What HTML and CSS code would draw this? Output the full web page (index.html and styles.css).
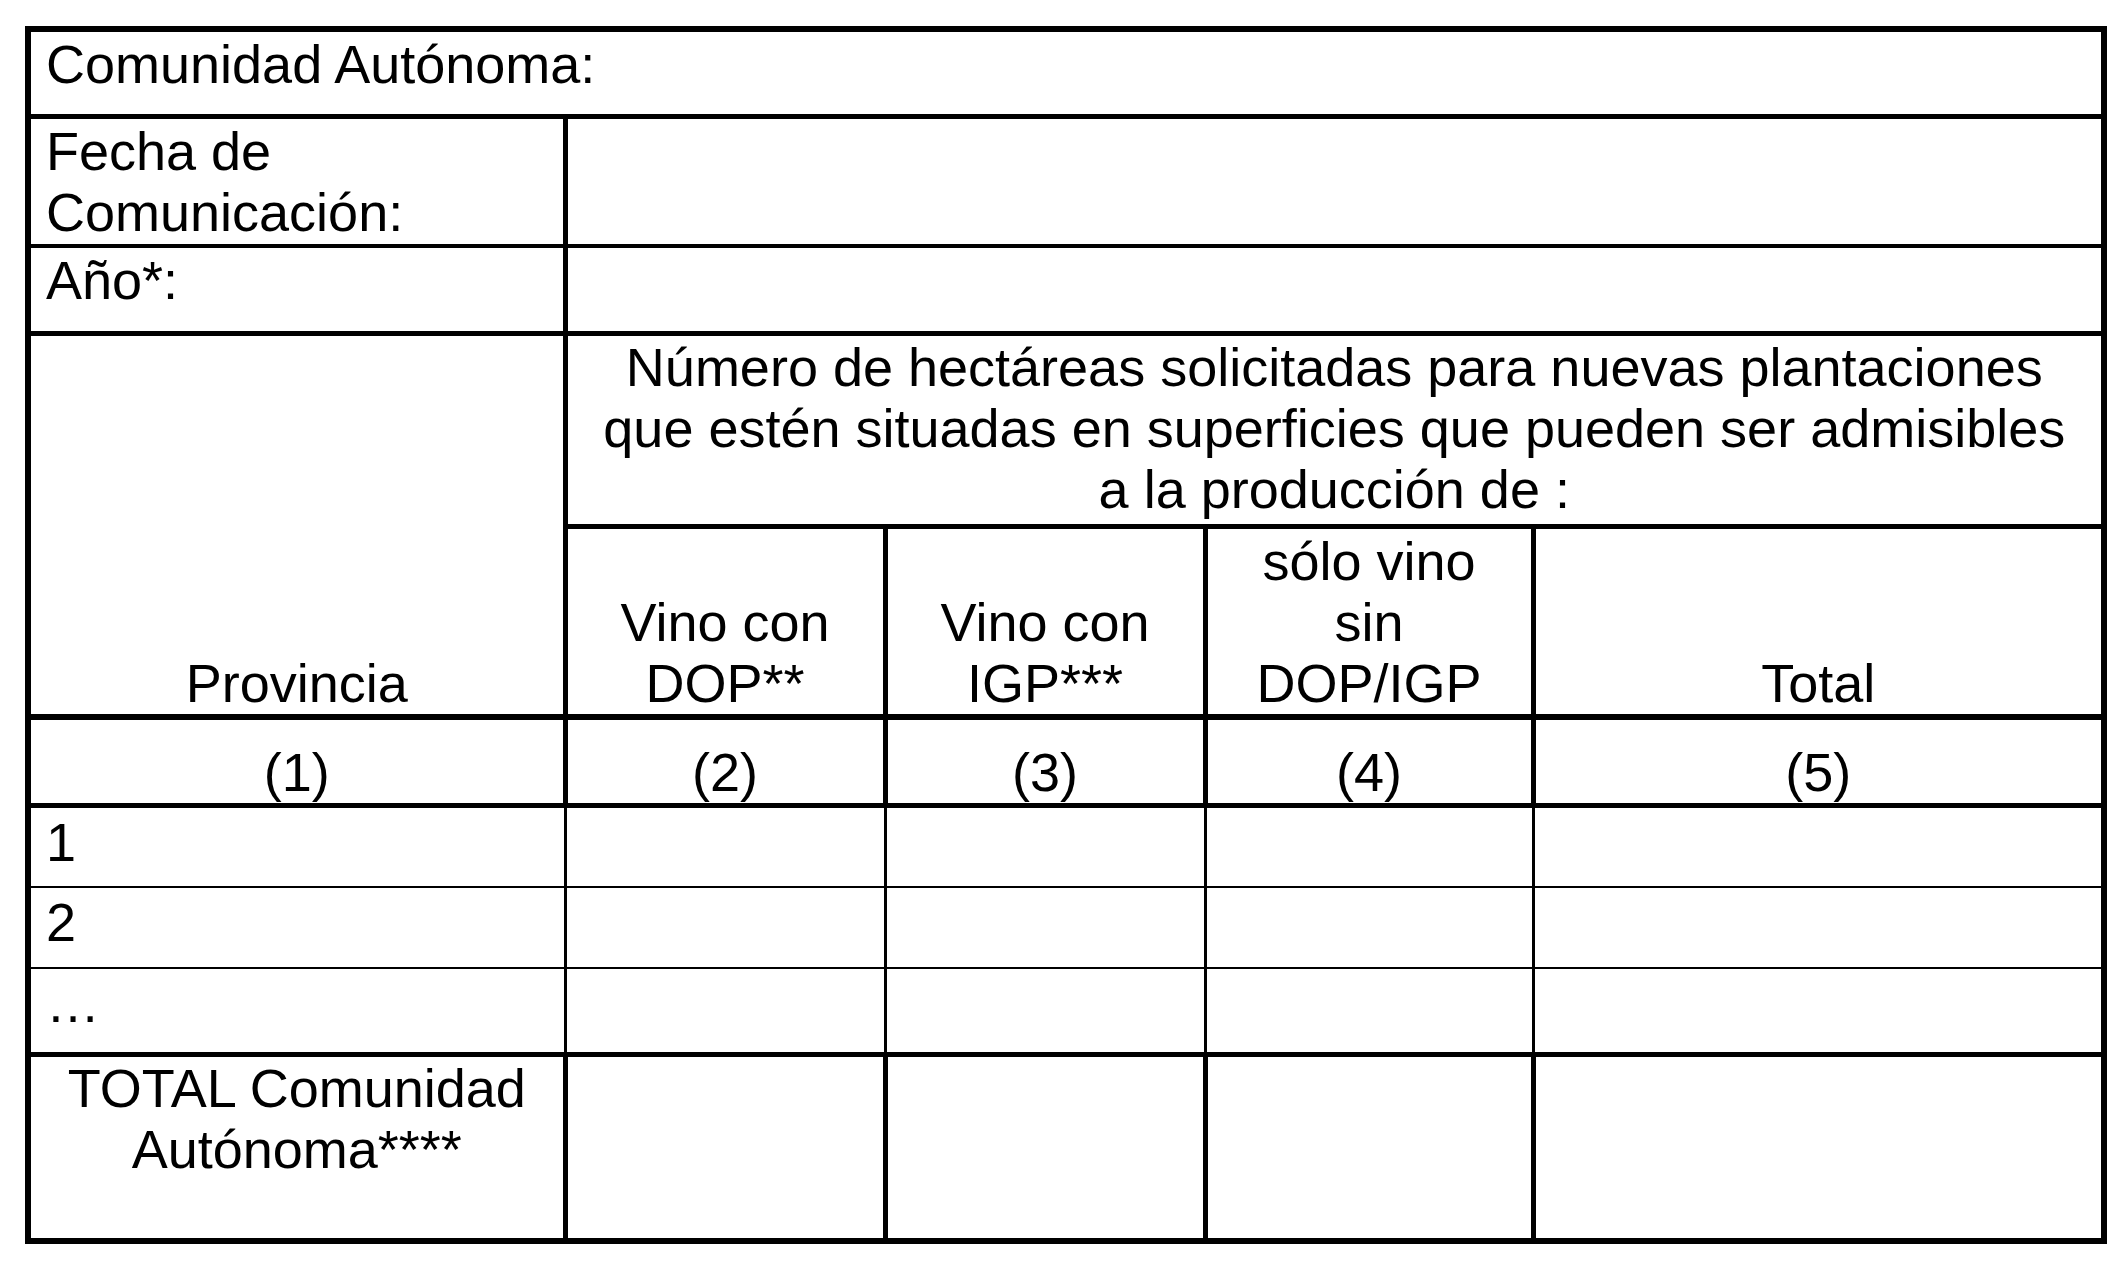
FILE: index.html
```html
<!DOCTYPE html>
<html lang="es">
<head>
  <meta charset="UTF-8">
  <title>Comunicación de hectáreas solicitadas</title>
  <link rel="stylesheet" href="styles.css">
</head>
<body>
  <table class="form">
    <colgroup>
      <col class="c-prov">
      <col class="c-dop">
      <col class="c-igp">
      <col class="c-sin">
      <col class="c-total">
    </colgroup>
    <tr class="r-ca">
      <td colspan="5" class="label">Comunidad Autónoma:</td>
    </tr>
    <tr class="r-fecha">
      <td class="label">Fecha de<br>Comunicación:</td>
      <td colspan="4"></td>
    </tr>
    <tr class="r-ano">
      <td class="label">Año*:</td>
      <td colspan="4"></td>
    </tr>
    <tr class="r-head">
      <td rowspan="2" class="bottom">Provincia</td>
      <td colspan="4" class="top-center">Número de hectáreas solicitadas para nuevas plantaciones<br>que estén situadas en superficies que pueden ser admisibles<br>a la producción de :</td>
    </tr>
    <tr class="r-cols">
      <td class="bottom">Vino con<br>DOP**</td>
      <td class="bottom">Vino con<br>IGP***</td>
      <td class="bottom">sólo vino<br>sin<br>DOP/IGP</td>
      <td class="bottom">Total</td>
    </tr>
    <tr class="r-index">
      <td class="bottom">(1)</td>
      <td class="bottom">(2)</td>
      <td class="bottom">(3)</td>
      <td class="bottom">(4)</td>
      <td class="bottom">(5)</td>
    </tr>
    <tr class="r-data r-1">
      <td class="label">1</td>
      <td></td><td></td><td></td><td></td>
    </tr>
    <tr class="r-data r-2">
      <td class="label">2</td>
      <td></td><td></td><td></td><td></td>
    </tr>
    <tr class="r-data r-3">
      <td class="label">…</td>
      <td></td><td></td><td></td><td></td>
    </tr>
    <tr class="r-total">
      <td class="top-center">TOTAL Comunidad<br>Autónoma****</td>
      <td></td><td></td><td></td><td></td>
    </tr>
  </table>
</body>
</html>
```

FILE: styles.css
```css
* {
  box-sizing: border-box;
}
body {
  margin: 0;
  background: #fff;
  color: #000;
  font-family: 'Liberation Sans', Arial, sans-serif;
}
.form {
  margin: 26px 0 0 25px;
  width: 2076px;
  table-layout: fixed;
  border-collapse: collapse;
  border: 6px solid #000;
  font-size: 54px;
  line-height: 61px;
}
.c-prov { width: 537px; }
.c-dop { width: 320px; }
.c-igp { width: 320px; }
.c-sin { width: 328px; }
.c-total { width: 571px; }

.form td {
  border: 5px solid #000;
  padding: 0 15px;
  vertical-align: top;
  text-align: center;
  white-space: nowrap;
}
.form td.label {
  text-align: left;
  padding-top: 2px;
}
.form td.bottom {
  vertical-align: bottom;
  padding-bottom: 0;
}
.form td.top-center {
  padding-top: 1px;
}

.r-ca { height: 87px; }
.r-fecha { height: 130px; }
.r-ano { height: 87px; }
.r-head { height: 193px; }
.r-cols { height: 191px; }
.r-index { height: 88px; }
.r-1 { height: 82px; }
.r-2 { height: 81px; }
.r-3 { height: 86px; }
.r-total { height: 187px; }

.r-fecha td { border-bottom-width: 4px; }
.r-ano td { border-top-width: 4px; }
.r-cols td,
.r-head td.bottom { border-bottom-width: 6px; }
.r-index td { border-top-width: 6px; }

.r-data td {
  border-top-width: 2px;
  border-bottom-width: 2px;
  border-left-width: 3px;
  border-right-width: 3px;
}
.r-data td.label {
  padding-top: 4px;
}
```
